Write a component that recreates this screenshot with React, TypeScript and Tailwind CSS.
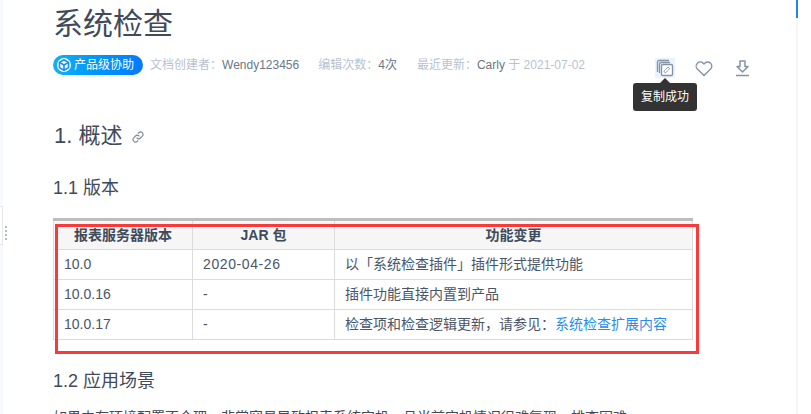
import React from "react";

const font = { fontFamily: '"Liberation Sans", "Noto Sans CJK SC", sans-serif' };

function Cube() {
  return (
    <svg width="14" height="14" viewBox="0 0 16 16" fill="none" stroke="#0a8fff" strokeWidth="1.8" strokeLinejoin="round">
      <path d="M8 2l5.2 3v6L8 14l-5.2-3V5z" />
      <path d="M2.800 5L8 8l5.2-3M8 8v6" />
    </svg>
  );
}

function Row({ a, b, children }: { a: string; b: string; children: React.ReactNode }) {
  return (
    <tr className="h-[30px]">
      <td className="border border-[#dcdcdc] pl-[10px] text-[14px] text-[#4a5568]">{a}</td>
      <td className="border border-[#dcdcdc] pl-[10px] text-[14px] tracking-[0.6px] text-[#4a5568]">{b}</td>
      <td className="border border-[#dcdcdc] pl-[10px] text-[14px] text-[#4a5568]">{children}</td>
    </tr>
  );
}

export default function App() {
  return (
    <div style={font} className="relative h-[414px] w-[811px] overflow-hidden bg-white">
      <div className="absolute left-0 top-0 h-full w-[3px] bg-[#f8f9fd]" />
      <div className="absolute left-0 top-[206px] h-[39px] w-[3px] border-y border-r border-[#e8e8e8] bg-white" />
      <div className="absolute left-[5px] top-[226px] flex h-[14px] flex-col justify-between">
        <i className="block h-[2px] w-[2px] bg-[#b4bcc8]" />
        <i className="block h-[2px] w-[2px] bg-[#b4bcc8]" />
        <i className="block h-[2px] w-[2px] bg-[#b4bcc8]" />
        <i className="block h-[2px] w-[2px] bg-[#b4bcc8]" />
      </div>
      <div className="absolute left-[796px] top-0 h-full w-[2px] bg-[#f5f5f5]">
        <div className="h-[18px] w-full bg-[#1e88e5]" />
      </div>

      <main className="w-[796px] pl-[53px]">
        <div className="h-[4px]" />
        <h1 className="h-[40px] text-[30px] leading-[40px] text-[#3f4a5a]">系统检查</h1>
        <div className="mt-[11px] flex h-[20px] items-center text-[12px] text-[#b8c2d0]">
          <span className="flex h-[20px] w-[90px] items-center rounded-full bg-gradient-to-r from-[#14b0f5] to-[#0878ff] pl-[4px] text-[12px] text-white">
            <span className="mr-[3px] flex h-[14px] w-[14px] items-center justify-center rounded-full bg-white"><Cube /></span>
            产品级协助
          </span>
          <span className="ml-[7px]">文档创建者：<span className="text-[#6b7686]">Wendy123456</span></span>
          <span className="ml-[19px]">编辑次数：<span className="text-[#6b7686]">4次</span></span>
          <span className="ml-[20px]">最近更新：<span className="text-[#6b7686]">Carly</span> 于 2021-07-02</span>
        </div>
        <h2 className="mt-[46px] flex h-[28px] items-center pl-[1px] text-[22px] text-[#3f4a5a]">
          1. 概述
          <svg className="ml-[10px] mt-[3px]" width="12" height="12" viewBox="0 0 24 24" fill="none" stroke="#7d8795" strokeWidth="2.2" strokeLinecap="round">
            <path d="M10 14a5 5 0 0 0 7 0l4-4a5 5 0 0 0-7-7l-1.500 1.500" />
            <path d="M14 10a5 5 0 0 0-7 0l-4 4a5 5 0 0 0 7 7l1.500-1.500" />
          </svg>
        </h2>
        <h3 className="mt-[27px] h-[24px] text-[18px] leading-[24px] text-[#3f4a5a]">1.1 版本</h3>
        <table className="mt-[18px] w-[640px] table-fixed border-collapse border-t-[3px] border-t-[#bdbdbd]">
          <colgroup>
            <col className="w-[139px]" />
            <col className="w-[142px]" />
            <col />
          </colgroup>
          <thead>
            <tr className="h-[30px] bg-[#f6f6f6] text-[14px] font-bold text-[#3f4a5a]">
              <th className="border border-t-[3px] border-[#dcdcdc] border-t-[#bdbdbd]">报表服务器版本</th>
              <th className="border border-t-[3px] border-[#dcdcdc] border-t-[#bdbdbd]">JAR 包</th>
              <th className="border border-t-[3px] border-[#dcdcdc] border-t-[#bdbdbd]">功能变更</th>
            </tr>
          </thead>
          <tbody>
            <Row a="10.0" b="2020-04-26">以「系统检查插件」插件形式提供功能</Row>
            <Row a="10.0.16" b="-">插件功能直接内置到产品</Row>
            <Row a="10.0.17" b="-">检查项和检查逻辑更新，请参见：<span className="text-[#2a8cf0]">系统检查扩展内容</span></Row>
          </tbody>
        </table>
        <h3 className="mt-[29px] h-[24px] text-[18px] leading-[24px] text-[#3f4a5a]">1.2 应用场景</h3>
        <p className="mt-[14px] whitespace-nowrap text-[14px] text-[#3f4a5a]">如果内存环境配置不合理，非常容易导致报表系统宕机，且当前宕机情况很难复现、排查困难。</p>
      </main>

      <div className="absolute left-[55px] top-[224px] h-[130px] w-[644px] border-[3px] border-[#f83a3a]" />

      <div className="absolute left-[655px] top-[58px] flex h-[20px] w-[20px] items-center justify-center bg-[#eaf4ff]">
        <svg width="18" height="18" viewBox="0 0 18 18" fill="none" stroke="#8592a6" strokeWidth="1.300">
          <path d="M13 1.500H3A1.500 1.500 0 0 0 1.500 3v10" />
          <path d="M14 3.500H5A1.500 1.500 0 0 0 3.500 5v9" />
          <rect x="5.500" y="5.500" width="11" height="11" rx="1.200" fill="#ffffff" />
          <path d="M10.300 9.700l1-1a1.200 1.200 0 0 1 1.700 1.700l-1 1" strokeLinecap="round" strokeWidth="1" />
          <path d="M11.200 12.300l-1 1a1.200 1.200 0 0 1-1.700-1.700l1-1" strokeLinecap="round" strokeWidth="1" />
        </svg>
      </div>
      <svg className="absolute left-[695px] top-[59px]" width="18" height="18" viewBox="0 0 24 24" fill="none" stroke="#8592a6" strokeWidth="1.800">
        <path d="M20.800 5.600a5.500 5.500 0 0 0-7.800 0L12 6.700l-1-1.100a5.500 5.500 0 1 0-7.800 7.800L12 22l8.800-8.600a5.500 5.500 0 0 0 0-7.800z" />
      </svg>
      <svg className="absolute left-[735px] top-[60px]" width="15" height="17" viewBox="0 0 15 17" fill="none" stroke="#8592a6" strokeWidth="1.500">
        <path d="M5 1h5v5.500h3L7.500 12 2 6.500h3z" strokeLinejoin="round" />
        <path d="M1 15.500h13" />
      </svg>
      <div className="absolute left-[633px] top-[83px] flex h-[28px] w-[64px] items-center justify-center rounded-[3px] bg-[#333333] text-[12px] text-white">
        复制成功
      </div>
      <div className="absolute left-[660px] top-[78px] h-0 w-0 border-x-[5px] border-b-[5px] border-x-transparent border-b-[#333333]" />
    </div>
  );
}
